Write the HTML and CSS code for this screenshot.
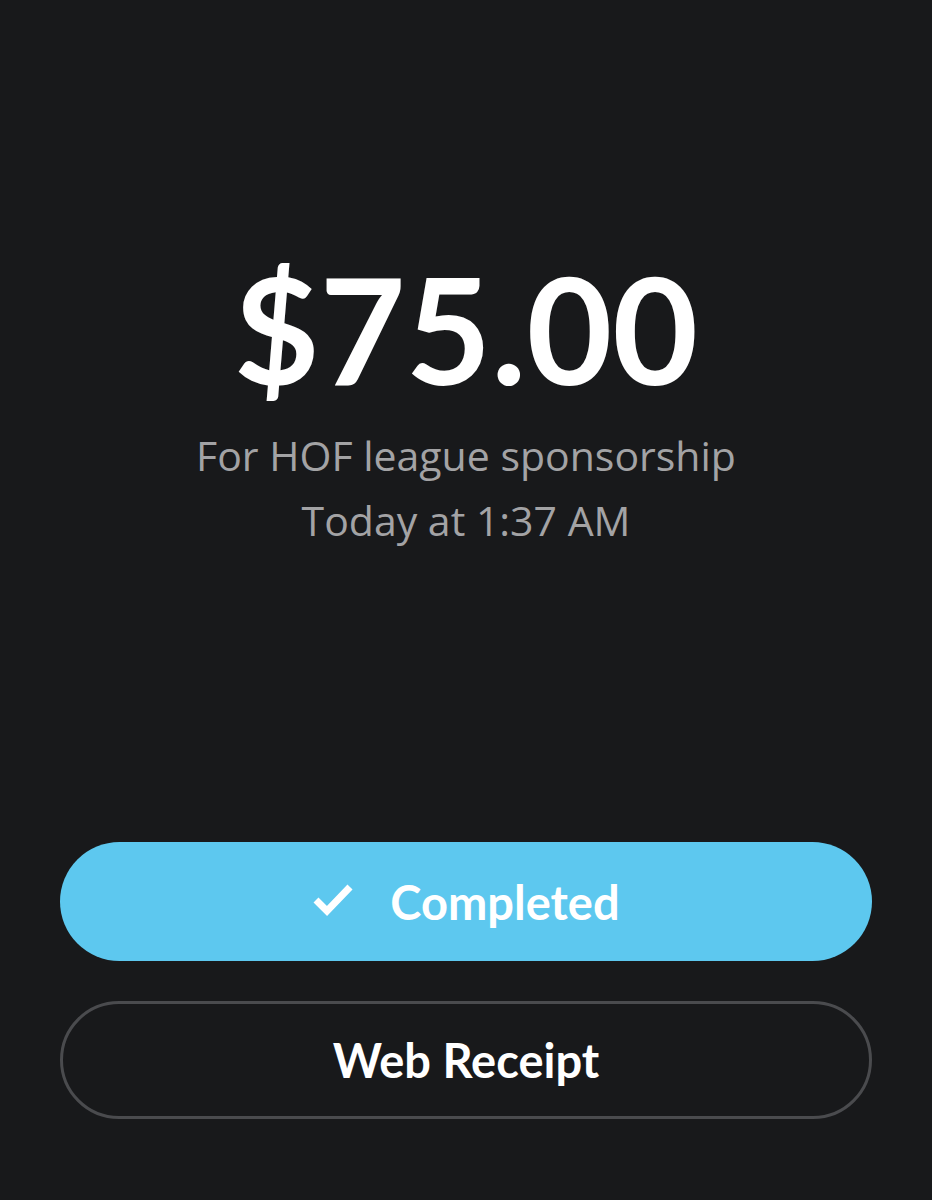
FILE: index.html
```html
<!DOCTYPE html>
<html>
<head>
<meta charset="utf-8">
<link rel="stylesheet" href="styles.css">
</head>
<body>
<div class="screen">
  <div class="summary">
    <div class="amount">$75.00</div>
    <div class="note">For HOF league sponsorship</div>
    <div class="time">Today at 1:37 AM</div>
  </div>
  <div class="actions">
    <div class="btn btn-done">
      <svg class="check" width="42" height="34" viewBox="0 0 42 34"><path d="M4 17 L15 28 L38 4" fill="none" stroke="#fff" stroke-width="7" stroke-linecap="butt" stroke-linejoin="miter"/></svg>
      <span>Completed</span>
    </div>
    <div class="btn btn-outline"><span>Web Receipt</span></div>
  </div>
</div>
</body>
</html>
```

FILE: styles.css
```css
html, body {
  margin: 0;
  padding: 0;
  background: #18191b;
}
.screen {
  width: 932px;
  height: 1200px;
  display: flex;
  flex-direction: column;
  font-family: Lato, "Noto Sans", sans-serif;
  color: #fff;
}
.summary {
  padding-top: 248px;
  display: flex;
  flex-direction: column;
  align-items: center;
}
.amount {
  font-size: 148px;
  font-weight: 700;
  line-height: 160px;
  letter-spacing: 0;
}
.note, .time {
  font-family: "Open Sans", Lato, sans-serif;
  color: #a3a3a5;
  font-size: 41px;
  line-height: 65px;
}
.note { margin-top: 15px; }
.actions {
  margin-top: auto;
  padding: 0 60px 81px;
  display: flex;
  flex-direction: column;
  gap: 40px;
}
.btn {
  height: 119px;
  border-radius: 60px;
  box-sizing: border-box;
  display: flex;
  align-items: center;
  justify-content: center;
  font-size: 47px;
  font-weight: 700;
}
.btn-done {
  background: #5dc8ef;
  gap: 36px;
}
.btn-outline {
  border: 3px solid #4a4b4e;
  height: 118px;
}
.check { margin-top: -4px; }
```
